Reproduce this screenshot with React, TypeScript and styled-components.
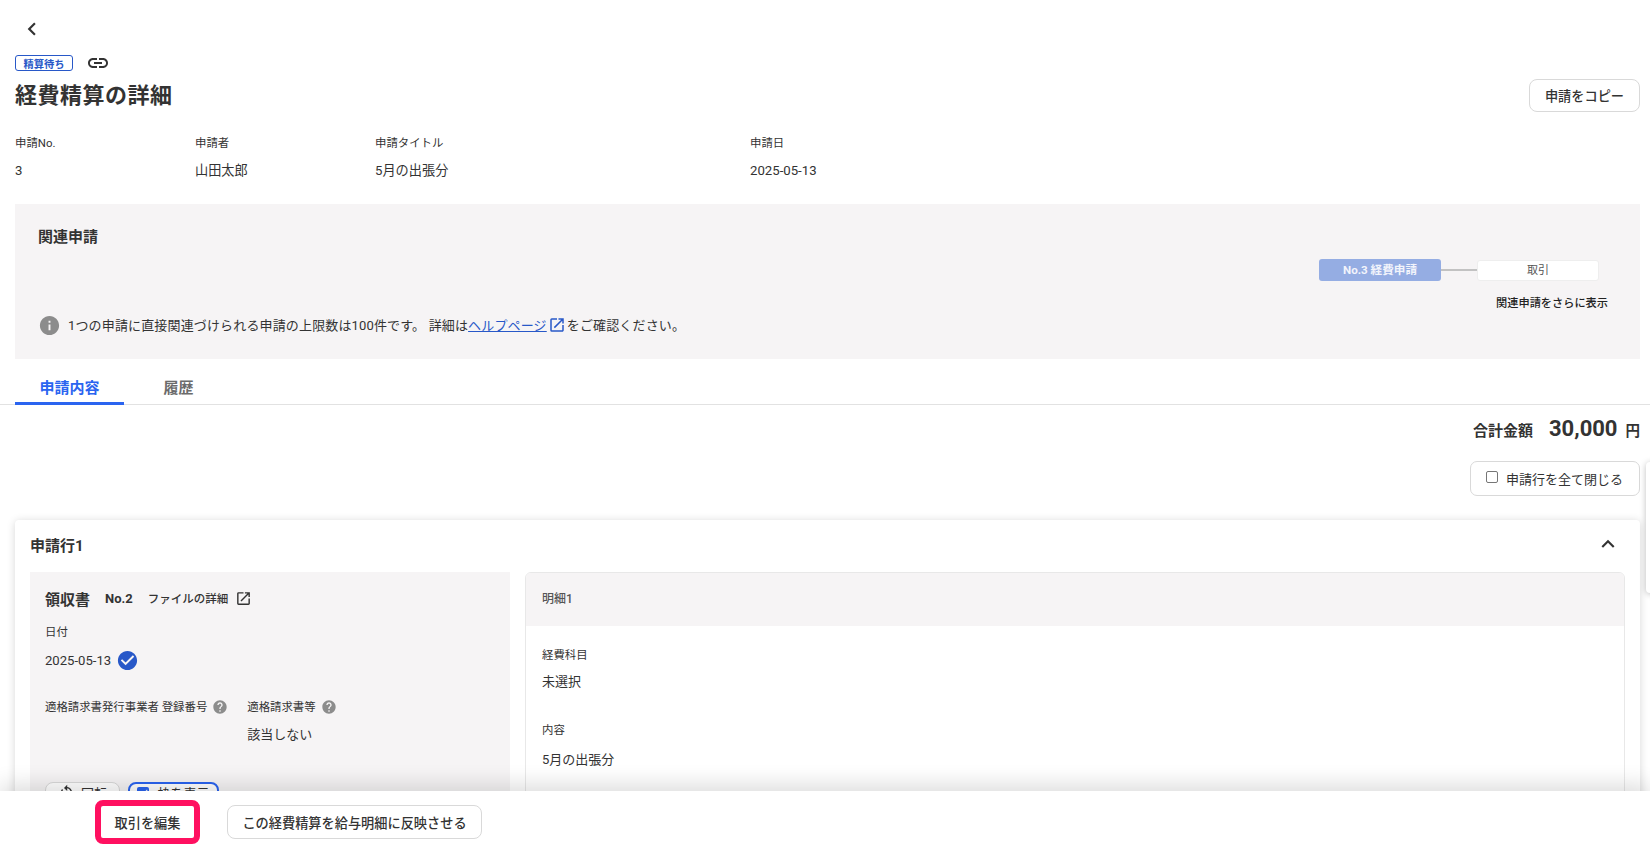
import { styled, createGlobalStyle } from 'styled-components';
import { MdCheckCircle, MdChevronLeft, MdExpandLess, MdHelp, MdInfo, MdLink, MdOpenInNew, MdRotateLeft, MdCheck } from 'react-icons/md';

const GlobalStyle = createGlobalStyle`
    html, body {
        margin: 0;
        height: 100%;
        overflow: hidden;
        background: #fff;
    }
    body {
        font-family: Roboto, "Noto Sans CJK JP", sans-serif;
        color: #333;
    }
`;

const metaItems = [
    { label: '申請No.', value: '3', width: 180 },
    { label: '申請者', value: '山田太郎', width: 180 },
    { label: '申請タイトル', value: '5月の出張分', width: 375 },
    { label: '申請日', value: '2025-05-13', width: 200 },
];

export default function App() {
    return (
        <Page>
            <GlobalStyle />
            <Header>
                <BackRow>
                    <MdChevronLeft size={26} />
                </BackRow>
                <StatusRow>
                    <Badge>精算待ち</Badge>
                    <LinkIcon>
                        <MdLink size={24} />
                    </LinkIcon>
                </StatusRow>
                <TitleRow>
                    <Title>経費精算の詳細</Title>
                    <Button $width={111} $height={33}>申請をコピー</Button>
                </TitleRow>
                <Meta>
                    {metaItems.map((item) => (
                        <MetaItem key={item.label} $width={item.width}>
                            <MetaLabel>{item.label}</MetaLabel>
                            <MetaValue>{item.value}</MetaValue>
                        </MetaItem>
                    ))}
                </Meta>
                <RelatedPanel>
                    <RelatedTitle>関連申請</RelatedTitle>
                    <RelatedBody>
                        <Notice>
                            <MdInfo size={23} color="#8c8c8c" />
                            <span>
                                1つの申請に直接関連づけられる申請の上限数は100件です。 詳細は
                                <HelpLink>ヘルプページ</HelpLink>
                                <HelpIcon>
                                    <MdOpenInNew size={18} />
                                </HelpIcon>
                                をご確認ください。
                            </span>
                        </Notice>
                        <Diagram>
                            <Nodes>
                                <CurrentNode>No.3 経費申請</CurrentNode>
                                <Connector />
                                <Node>取引</Node>
                            </Nodes>
                            <ShowMore>関連申請をさらに表示</ShowMore>
                        </Diagram>
                    </RelatedBody>
                </RelatedPanel>
            </Header>

            <Tabs>
                <ActiveTab>申請内容</ActiveTab>
                <Tab>履歴</Tab>
            </Tabs>

            <Content>
                <Total>
                    <TotalLabel>合計金額</TotalLabel>
                    <TotalValue>30,000</TotalValue>
                    <TotalUnit>円</TotalUnit>
                </Total>
                <ToggleRow>
                    <CollapseToggle>
                        <Checkbox />
                        申請行を全て閉じる
                    </CollapseToggle>
                </ToggleRow>
                <Card>
                    <CardHeader>
                        <CardTitle>申請行1</CardTitle>
                        <MdExpandLess size={26} />
                    </CardHeader>
                    <CardBody>
                        <Receipt>
                            <ReceiptHead>
                                <ReceiptTitle>領収書</ReceiptTitle>
                                <ReceiptNo>No.2</ReceiptNo>
                                <FileLink>ファイルの詳細</FileLink>
                                <MdOpenInNew size={17} />
                            </ReceiptHead>
                            <DateLabel>日付</DateLabel>
                            <DateRow>
                                2025-05-13
                                <MdCheckCircle size={23} color="#2858c8" />
                            </DateRow>
                            <InvoiceRow>
                                <InvoiceColumn>
                                    <FieldLabel>
                                        適格請求書発行事業者 登録番号
                                        <MdHelp size={16} color="#8c8c8c" />
                                    </FieldLabel>
                                </InvoiceColumn>
                                <InvoiceColumn>
                                    <FieldLabel>
                                        適格請求書等
                                        <MdHelp size={16} color="#8c8c8c" />
                                    </FieldLabel>
                                    <InvoiceValue>該当しない</InvoiceValue>
                                </InvoiceColumn>
                            </InvoiceRow>
                            <ViewerTools>
                                <ToolButton $width={75}>
                                    <MdRotateLeft size={17} />
                                    回転
                                </ToolButton>
                                <FrameButton>
                                    <FrameCheck>
                                        <MdCheck size={11} color="#fff" />
                                    </FrameCheck>
                                    枠を表示
                                </FrameButton>
                            </ViewerTools>
                        </Receipt>
                        <Detail>
                            <DetailHead>明細1</DetailHead>
                            <DetailBody>
                                <FieldLabel>経費科目</FieldLabel>
                                <DetailValue $top={8}>未選択</DetailValue>
                                <FieldLabel>内容</FieldLabel>
                                <DetailValue $top={11}>5月の出張分</DetailValue>
                            </DetailBody>
                        </Detail>
                    </CardBody>
                </Card>
            </Content>

            <SidePeek />

            <Footer>
                <HighlightedButton>取引を編集</HighlightedButton>
                <Button $width={255} $height={34}>この経費精算を給与明細に反映させる</Button>
            </Footer>
        </Page>
    );
}

const Page = styled.div`
    position: relative;
    height: 851px;
    overflow: hidden;
`;

const Header = styled.div`
    padding: 0 10px 0 15px;
`;

const BackRow = styled.div`
    display: flex;
    align-items: center;
    height: 55px;
    padding: 3px 0 0 4px;
    box-sizing: border-box;
    color: #333;
`;

const StatusRow = styled.div`
    display: flex;
    align-items: center;
    height: 16px;
    gap: 13px;
`;

const Badge = styled.div`
    display: flex;
    align-items: center;
    justify-content: center;
    box-sizing: border-box;
    width: 58px;
    height: 16px;
    border: 1px solid #2858c8;
    border-radius: 3px;
    color: #2858c8;
    font-size: 10.3px;
    font-weight: 700;
`;

const LinkIcon = styled.div`
    display: flex;
    color: #333;
`;

const TitleRow = styled.div`
    display: flex;
    align-items: center;
    justify-content: space-between;
    height: 33px;
    margin-top: 8px;
`;

const Title = styled.h1`
    margin: 0;
    font-size: 22px;
    font-weight: 700;
    letter-spacing: 0.5px;
    line-height: 33px;
`;

const Button = styled.button<{ $width: number; $height: number }>`
    width: ${(p) => p.$width}px;
    height: ${(p) => p.$height}px;
    padding: 0;
    background: #fff;
    border: 1px solid #d9d9d9;
    border-radius: 8px;
    color: #333;
    font-family: inherit;
    font-size: 13.2px;
    font-weight: 500;
`;

const Meta = styled.div`
    display: flex;
    margin-top: 22px;
    height: 70px;
`;

const MetaItem = styled.div<{ $width: number }>`
    width: ${(p) => p.$width}px;
`;

const MetaLabel = styled.div`
    font-size: 11.4px;
    line-height: 18px;
`;

const MetaValue = styled.div`
    margin-top: 9px;
    font-size: 13.2px;
    line-height: 20px;
`;

const RelatedPanel = styled.section`
    height: 155px;
    padding: 23px 32px 0 23px;
    box-sizing: border-box;
    background: #f6f4f5;
`;

const RelatedTitle = styled.div`
    font-size: 15px;
    font-weight: 700;
    line-height: 20px;
`;

const RelatedBody = styled.div`
    display: flex;
    align-items: flex-start;
    justify-content: space-between;
    margin-top: 12px;
`;

const Notice = styled.div`
    display: flex;
    align-items: center;
    gap: 7px;
    margin-top: 55px;
    font-size: 13px;
    letter-spacing: 0.15px;
    line-height: 23px;
    white-space: nowrap;
`;

const HelpLink = styled.a`
    color: #2858c8;
    text-decoration: underline;
`;

const HelpIcon = styled.span`
    display: inline-flex;
    vertical-align: -4px;
    margin: 0 1px;
    color: #2858c8;
`;

const Diagram = styled.div`
    display: flex;
    flex-direction: column;
    align-items: flex-end;
    gap: 15px;
`;

const Nodes = styled.div`
    display: flex;
    align-items: center;
    margin-right: 9px;
`;

const CurrentNode = styled.div`
    width: 122px;
    height: 22px;
    background: #95ade3;
    border-radius: 3px;
    color: #f2f4fb;
    font-size: 11.6px;
    font-weight: 700;
    line-height: 22px;
    text-align: center;
`;

const Connector = styled.div`
    width: 36px;
    height: 2px;
    background: #c2c2c2;
`;

const Node = styled.div`
    box-sizing: border-box;
    width: 122px;
    height: 21px;
    background: #fff;
    border: 1px solid #eeeeee;
    border-radius: 3px;
    color: #555;
    font-size: 11px;
    line-height: 19px;
    text-align: center;
`;

const ShowMore = styled.div`
    color: #222;
    font-size: 11.2px;
    font-weight: 500;
    line-height: 16px;
`;

const Tabs = styled.nav`
    display: flex;
    height: 46px;
    padding-left: 15px;
    box-sizing: border-box;
    border-bottom: 1px solid #e2e2e2;
`;

const Tab = styled.div`
    width: 109px;
    padding-top: 19px;
    box-sizing: border-box;
    color: #6b6b6b;
    font-size: 15px;
    font-weight: 700;
    line-height: 20px;
    text-align: center;
`;

const ActiveTab = styled(Tab)`
    height: 46px;
    border-bottom: 3px solid #2a64f0;
    color: #2a64f0;
`;

const Content = styled.div`
    padding: 0 10px 0 15px;
`;

const Total = styled.div`
    display: flex;
    align-items: baseline;
    justify-content: flex-end;
    height: 56px;
    padding-top: 11px;
    box-sizing: border-box;
    font-weight: 700;
`;

const TotalLabel = styled.span`
    margin-right: 16px;
    font-size: 15px;
`;

const TotalValue = styled.span`
    margin-right: 8px;
    font-size: 22px;
`;

const TotalUnit = styled.span`
    font-size: 14.5px;
`;

const ToggleRow = styled.div`
    display: flex;
    justify-content: flex-end;
`;

const CollapseToggle = styled.div`
    display: flex;
    align-items: center;
    gap: 8px;
    box-sizing: border-box;
    width: 170px;
    height: 35px;
    padding-left: 15px;
    border: 1px solid #d9d9d9;
    border-radius: 7px;
    font-size: 13px;
`;

const Checkbox = styled.span`
    box-sizing: border-box;
    width: 12px;
    height: 12px;
    margin-bottom: 3px;
    border: 1px solid #767676;
    border-radius: 2px;
`;

const Card = styled.section`
    margin-top: 24px;
    background: #fff;
    border-radius: 4px;
    box-shadow: 0 1px 8px rgba(0, 0, 0, 0.16);
    height: 400px;
`;

const CardHeader = styled.div`
    display: flex;
    align-items: center;
    justify-content: space-between;
    box-sizing: border-box;
    height: 52px;
    padding: 0 19px 4px 15px;
    color: #333;
`;

const CardTitle = styled.div`
    font-size: 15px;
    font-weight: 700;
`;

const CardBody = styled.div`
    display: grid;
    grid-template-columns: 480px 1fr;
    gap: 15px;
    padding: 0 15px;
`;

const Receipt = styled.div`
    height: 300px;
    padding: 15px;
    box-sizing: border-box;
    background: #f6f4f5;
`;

const ReceiptHead = styled.div`
    display: flex;
    align-items: center;
    height: 22px;
    color: #333;
`;

const ReceiptTitle = styled.span`
    margin-right: 15px;
    font-size: 15px;
    font-weight: 700;
`;

const ReceiptNo = styled.span`
    margin-right: 15px;
    font-size: 13px;
    font-weight: 700;
`;

const FileLink = styled.span`
    margin-right: 7px;
    font-size: 11.5px;
    font-weight: 500;
`;

const FieldLabel = styled.div`
    display: flex;
    align-items: center;
    gap: 5px;
    font-size: 11.4px;
    line-height: 18px;
    white-space: nowrap;
`;

const DateLabel = styled(FieldLabel)`
    margin-top: 14px;
`;

const DateRow = styled.div`
    display: flex;
    align-items: center;
    gap: 5px;
    height: 24px;
    margin-top: 7px;
    font-size: 13.1px;
`;

const InvoiceRow = styled.div`
    display: flex;
    gap: 19px;
    margin-top: 26px;
    height: 84px;
`;

const InvoiceColumn = styled.div`
    display: flex;
    flex-direction: column;
`;

const InvoiceValue = styled.div`
    margin-top: 9px;
    font-size: 13px;
    line-height: 20px;
`;

const ViewerTools = styled.div`
    display: flex;
    gap: 8px;
`;

const ToolButton = styled.div<{ $width: number }>`
    display: flex;
    align-items: center;
    justify-content: center;
    gap: 6px;
    box-sizing: border-box;
    width: ${(p) => p.$width}px;
    height: 30px;
    padding-bottom: 9px;
    background: #fff;
    border: 1px solid #d9d9d9;
    border-radius: 8px;
    font-size: 13px;
`;

const FrameButton = styled(ToolButton).attrs({ $width: 91 })`
    gap: 8px;
    border: 2px solid #2a64f0;
`;

const FrameCheck = styled.span`
    display: flex;
    align-items: center;
    justify-content: center;
    width: 12px;
    height: 12px;
    background: #2a64f0;
    border-radius: 2px;
`;

const Detail = styled.div`
    height: 300px;
    border: 1px solid #e8e8e8;
    border-radius: 6px;
    overflow: hidden;
`;

const DetailHead = styled.div`
    height: 53px;
    padding-left: 16px;
    background: #f6f4f5;
    color: #555;
    font-size: 12px;
    font-weight: 500;
    line-height: 53px;
`;

const DetailBody = styled.div`
    padding: 20px 16px;
`;

const DetailValue = styled.div<{ $top: number }>`
    height: 49px;
    margin-top: ${(p) => p.$top}px;
    font-size: 13px;
    line-height: 20px;
`;

const SidePeek = styled.div`
    position: absolute;
    left: 1646px;
    top: 462px;
    width: 30px;
    height: 131px;
    background: #fff;
    border-radius: 4px;
    box-shadow: 0 1px 6px rgba(0, 0, 0, 0.25);
`;

const Footer = styled.footer`
    position: absolute;
    left: 0;
    right: 0;
    bottom: 0;
    display: flex;
    align-items: center;
    gap: 27px;
    box-sizing: border-box;
    height: 60px;
    padding: 2px 0 0 95px;
    background: #fff;
    box-shadow: 0 -6px 22px rgba(0, 0, 0, 0.14);
`;

const HighlightedButton = styled.button`
    box-sizing: border-box;
    width: 105px;
    height: 44px;
    padding: 0;
    background: #fff;
    border: 6px solid #ff1060;
    border-radius: 8px;
    color: #333;
    font-family: inherit;
    font-size: 13.2px;
    font-weight: 500;
`;
